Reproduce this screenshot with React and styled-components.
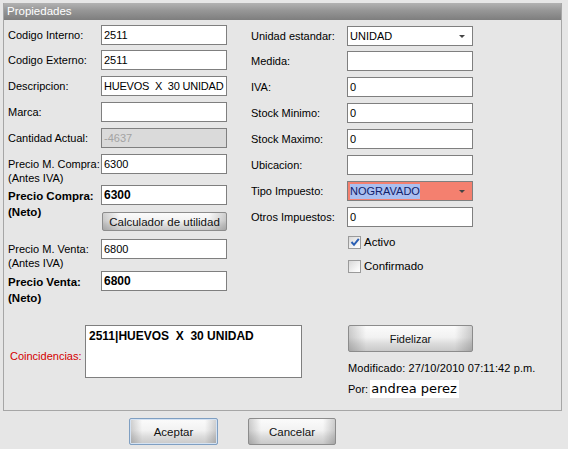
import React from 'react';
import styled, { createGlobalStyle } from 'styled-components';

const GlobalStyle = createGlobalStyle`
  html, body {
    margin: 0;
    padding: 0;
    background: #e6e6e6;
  }
  body {
    font-family: "Liberation Sans", Arial, sans-serif;
    font-size: 11px;
    color: #000;
  }
`;

const Page = styled.div`
  width: 568px;
  height: 449px;
  box-sizing: border-box;
  padding: 3px 0 0 3px;
  background: #e6e6e6;
`;

const Panel = styled.div`
  width: 559px;
  height: 408px;
  box-sizing: border-box;
  border: 1px solid #a6a6a6;
  border-top: none;
  display: flex;
  flex-direction: column;
`;

const PanelHeader = styled.div`
  height: 17px;
  line-height: 17px;
  padding-left: 3px;
  color: #fff;
  font-size: 11.5px;
  background: linear-gradient(#b2b2b2, #969696 45%, #7e7e7e);
`;

const PanelBody = styled.div`
  padding: 5px 0 0 4px;
`;

const Columns = styled.div`
  display: flex;
  gap: 24px;
`;

const Column = styled.div`
  width: ${(p) => p.$w}px;
  display: flex;
  flex-direction: column;
`;

const FieldRow = styled.div`
  display: flex;
  align-items: flex-start;
  height: ${(p) => p.$h || 20}px;
  margin-top: ${(p) => p.$mt || 0}px;
`;

const Label = styled.div`
  width: ${(p) => p.$w}px;
  flex-shrink: 0;
  padding-top: 3px;
  line-height: ${(p) => (p.$bold ? 16 : 14)}px;
  font-weight: ${(p) => (p.$bold ? 'bold' : 'normal')};
  font-size: ${(p) => (p.$bold ? 11.5 : 11)}px;
  white-space: nowrap;
`;

const TextBox = styled.div`
  width: 126px;
  height: 20px;
  box-sizing: border-box;
  border: 1px solid #7f7f7f;
  background: ${(p) => p.$bg || '#fff'};
  color: ${(p) => (p.$disabled ? '#a3a3a3' : '#000')};
  font-weight: ${(p) => (p.$bold ? 'bold' : 'normal')};
  font-size: ${(p) => (p.$bold ? 12 : 11)}px;
  letter-spacing: ${(p) => (p.$tight ? '-0.2px' : 'normal')};
  line-height: 18px;
  padding: 0 3px 0 2px;
  white-space: pre;
  overflow: hidden;
  display: flex;
  align-items: center;
  justify-content: space-between;
`;

const Arrow = styled.span`
  width: 0;
  height: 0;
  border-left: 3px solid transparent;
  border-right: 3px solid transparent;
  border-top: 3px solid #444;
  margin-right: 4px;
`;

const Selected = styled.span`
  background: #aabff0;
  color: #10206a;
  line-height: 15px;
`;

const Button = styled.button`
  width: ${(p) => p.$w}px;
  height: ${(p) => p.$h}px;
  box-sizing: border-box;
  padding: 0;
  font-family: "Liberation Sans", Arial, sans-serif;
  font-size: ${(p) => p.$fs || 11}px;
  color: #111;
  border: 1px solid ${(p) => (p.$default ? '#7f9fc2' : '#8c8c8c')};
  border-radius: 2px;
  box-shadow: ${(p) => (p.$default ? 'inset 0 0 0 1px #d4e2f2' : 'none')};
  background:
    linear-gradient(to right, rgba(0, 0, 0, 0.18), rgba(0, 0, 0, 0) 14%, rgba(0, 0, 0, 0) 86%, rgba(0, 0, 0, 0.18)),
    linear-gradient(#fbfbfb, #f2f2f2 45%, #dcdcdc 70%, #c9c9c9);
  margin-left: ${(p) => p.$ml || 0}px;
  margin-top: ${(p) => p.$mt || 0}px;
`;

const CheckRow = styled.div`
  display: flex;
  align-items: center;
  gap: 3px;
  height: 14px;
  margin-top: ${(p) => p.$mt || 0}px;
  padding-left: 97px;
  font-size: 11.5px;
`;

const Box = styled.span`
  width: 13px;
  height: 13px;
  box-sizing: border-box;
  border: 1px solid #9a9a9a;
  background: linear-gradient(135deg, #d8d8d8, #f6f6f6 70%, #fff);
  display: flex;
  align-items: center;
  justify-content: center;
`;

const BottomRow = styled.div`
  display: flex;
  align-items: flex-start;
  margin-top: 34px;
`;

const CoinGroup = styled.div`
  display: flex;
  align-items: center;
  width: 294px;
`;

const RedLabel = styled.div`
  width: 75px;
  padding: 8px 0 0 2px;
  color: #d40000;
  font-size: 11px;
`;

const Coincidencias = styled.div`
  width: 217px;
  height: 53px;
  box-sizing: border-box;
  border: 1px solid #7f7f7f;
  background: #fff;
  padding: 3px 3px;
  font-weight: bold;
  font-size: 12px;
  white-space: pre;
`;

const FidelGroup = styled.div`
  margin-left: 46px;
  display: flex;
  flex-direction: column;
`;

const Modified = styled.div`
  margin-top: 9px;
  line-height: 14px;
  font-size: 11px;
  letter-spacing: 0.1px;
`;

const ByLine = styled.div`
  display: flex;
  align-items: center;
  margin-top: 5px;
  font-size: 11px;
`;

const UserName = styled.span`
  background: #fff;
  height: 18px;
  line-height: 18px;
  padding: 0 2px 0 1px;
  margin-left: 2px;
  font-family: "DejaVu Sans", Verdana, sans-serif;
  font-size: 13px;
`;

const Footer = styled.div`
  display: flex;
  gap: 30px;
  padding-left: 126px;
  margin-top: 7px;
`;

const Check = () => (
  <svg width="10" height="10" viewBox="0 0 10 10">
    <path d="M1.5 5 L4 7.8 L8.8 1.8" fill="none" stroke="#2b5fb4" strokeWidth="2" />
  </svg>
);

const leftFields = [
  { label: 'Codigo Interno:', value: '2511' },
  { label: 'Codigo Externo:', value: '2511', mt: 5 },
  { label: 'Descripcion:', value: 'HUEVOS  X  30 UNIDAD', mt: 6, tight: true },
  { label: 'Marca:', value: '', mt: 6 },
  { label: 'Cantidad Actual:', value: '-4637', mt: 6, disabled: true, bg: '#dadada' },
];

const rightFields = [
  { label: 'Medida:', value: '', mt: 5 },
  { label: 'IVA:', value: '0', mt: 6 },
  { label: 'Stock Minimo:', value: '0', mt: 6 },
  { label: 'Stock Maximo:', value: '0', mt: 6 },
  { label: 'Ubicacion:', value: '', mt: 6 },
];

export default function App() {
  return (
    <Page>
      <GlobalStyle />
      <Panel>
        <PanelHeader>Propiedades</PanelHeader>
        <PanelBody>
          <Columns>
            <Column $w={219}>
              {leftFields.map((f) => (
                <FieldRow key={f.label} $mt={f.mt}>
                  <Label $w={93}>{f.label}</Label>
                  <TextBox $disabled={f.disabled} $bg={f.bg} $tight={f.tight}>{f.value}</TextBox>
                </FieldRow>
              ))}
              <FieldRow $mt={6} $h={25}>
                <Label $w={93}>Precio M. Compra:<br />(Antes IVA)</Label>
                <TextBox>6300</TextBox>
              </FieldRow>
              <FieldRow $mt={6}>
                <Label $w={93} $bold>Precio Compra:<br />(Neto)</Label>
                <TextBox $bold>6300</TextBox>
              </FieldRow>
              <Button $w={125} $h={19} $ml={94} $mt={7} $fs={11.5}>Calculador de utilidad</Button>
              <FieldRow $mt={8} $h={26}>
                <Label $w={93}>Precio M. Venta:<br />(Antes IVA)</Label>
                <TextBox>6800</TextBox>
              </FieldRow>
              <FieldRow $mt={6}>
                <Label $w={93} $bold>Precio Venta:<br />(Neto)</Label>
                <TextBox $bold>6800</TextBox>
              </FieldRow>
            </Column>

            <Column $w={222}>
              <FieldRow $mt={1}>
                <Label $w={96}>Unidad estandar:</Label>
                <TextBox>UNIDAD<Arrow /></TextBox>
              </FieldRow>
              {rightFields.map((f) => (
                <FieldRow key={f.label} $mt={f.mt}>
                  <Label $w={96}>{f.label}</Label>
                  <TextBox>{f.value}</TextBox>
                </FieldRow>
              ))}
              <FieldRow $mt={6}>
                <Label $w={96}>Tipo Impuesto:</Label>
                <TextBox $bg="#f4806f"><Selected>NOGRAVADO</Selected><Arrow /></TextBox>
              </FieldRow>
              <FieldRow $mt={6}>
                <Label $w={96}>Otros Impuestos:</Label>
                <TextBox>0</TextBox>
              </FieldRow>
              <CheckRow $mt={8}>
                <Box><Check /></Box>
                Activo
              </CheckRow>
              <CheckRow $mt={10}>
                <Box />
                Confirmado
              </CheckRow>
            </Column>
          </Columns>

          <BottomRow>
            <CoinGroup>
              <RedLabel>Coincidencias:</RedLabel>
              <Coincidencias>2511|HUEVOS  X  30 UNIDAD</Coincidencias>
            </CoinGroup>
            <FidelGroup>
              <Button $w={125} $h={27}>Fidelizar</Button>
              <Modified>Modificado: 27/10/2010 07:11:42 p.m.</Modified>
              <ByLine>
                Por:<UserName>andrea perez</UserName>
              </ByLine>
            </FidelGroup>
          </BottomRow>
        </PanelBody>
      </Panel>
      <Footer>
        <Button $w={89} $h={27} $default $fs={11.5}>Aceptar</Button>
        <Button $w={88} $h={27} $fs={11.5}>Cancelar</Button>
      </Footer>
    </Page>
  );
}
